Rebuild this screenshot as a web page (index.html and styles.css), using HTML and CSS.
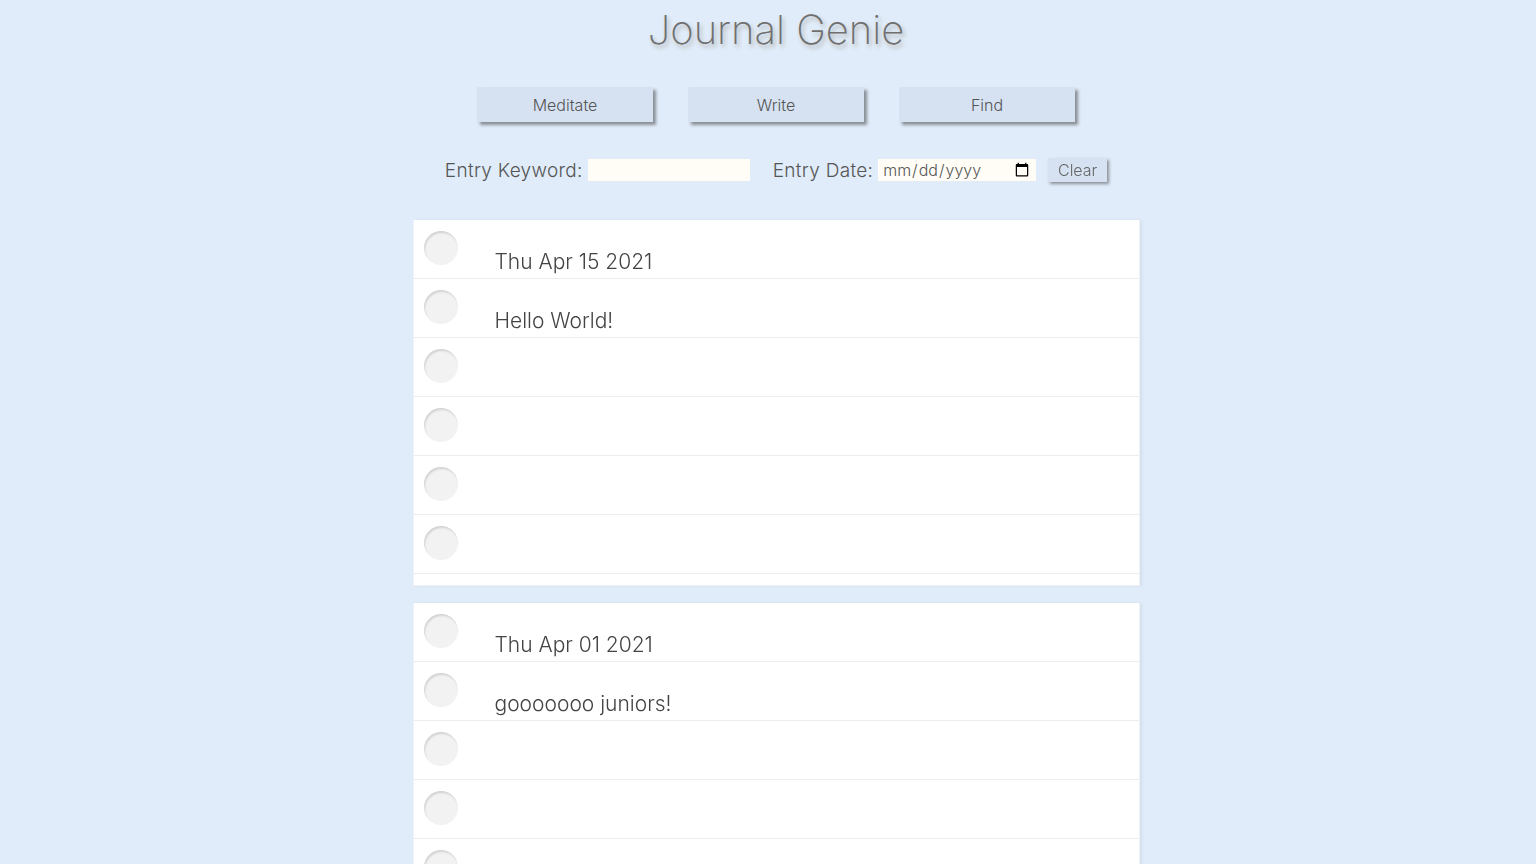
FILE: index.html
```html
<!DOCTYPE html>
<html lang="en">
<head>
<meta charset="utf-8">
<title>Journal Genie</title>
<link rel="stylesheet" href="styles.css">
</head>
<body>
<div class="app">
  <h1 class="title">Journal Genie</h1>
  <nav class="actions">
    <button class="action">Meditate</button>
    <button class="action">Write</button>
    <button class="action">Find</button>
  </nav>
  <form class="search">
    <label class="field">Entry Keyword: <input class="keyword" type="text" autofocus></label>
    <label class="field">Entry Date: <input class="date" type="date"></label>
    <button type="button" class="clear">Clear</button>
  </form>
  <main class="entries">
    <section class="page">
      <div class="line"><span class="hole"></span><span class="text">Thu Apr 15 2021</span></div>
      <div class="line"><span class="hole"></span><span class="text">Hello World!</span></div>
      <div class="line"><span class="hole"></span></div>
      <div class="line"><span class="hole"></span></div>
      <div class="line"><span class="hole"></span></div>
      <div class="line"><span class="hole"></span></div>
      <div class="line"><span class="hole"></span></div>
      <div class="line"><span class="hole"></span></div>
    </section>
    <section class="page">
      <div class="line"><span class="hole"></span><span class="text">Thu Apr 01 2021</span></div>
      <div class="line"><span class="hole"></span><span class="text">gooooooo juniors!</span></div>
      <div class="line"><span class="hole"></span></div>
      <div class="line"><span class="hole"></span></div>
      <div class="line"><span class="hole"></span></div>
      <div class="line"><span class="hole"></span></div>
      <div class="line"><span class="hole"></span></div>
      <div class="line"><span class="hole"></span></div>
    </section>
    <section class="page">
      <div class="line"><span class="hole"></span></div>
      <div class="line"><span class="hole"></span></div>
      <div class="line"><span class="hole"></span></div>
      <div class="line"><span class="hole"></span></div>
      <div class="line"><span class="hole"></span></div>
      <div class="line"><span class="hole"></span></div>
      <div class="line"><span class="hole"></span></div>
    </section>
    <section class="page">
      <div class="line"><span class="hole"></span></div>
      <div class="line"><span class="hole"></span></div>
      <div class="line"><span class="hole"></span></div>
      <div class="line"><span class="hole"></span></div>
      <div class="line"><span class="hole"></span></div>
      <div class="line"><span class="hole"></span></div>
      <div class="line"><span class="hole"></span></div>
    </section>
    <section class="page">
      <div class="line"><span class="hole"></span></div>
      <div class="line"><span class="hole"></span></div>
      <div class="line"><span class="hole"></span></div>
      <div class="line"><span class="hole"></span></div>
      <div class="line"><span class="hole"></span></div>
      <div class="line"><span class="hole"></span></div>
      <div class="line"><span class="hole"></span></div>
    </section>
    <section class="page">
      <div class="line"><span class="hole"></span></div>
      <div class="line"><span class="hole"></span></div>
      <div class="line"><span class="hole"></span></div>
      <div class="line"><span class="hole"></span></div>
      <div class="line"><span class="hole"></span></div>
      <div class="line"><span class="hole"></span></div>
      <div class="line"><span class="hole"></span></div>
    </section>
  </main>
</div>
</body>
</html>
```
FILE: styles.css
```css
html {
  background: #e0ecf9;
  overflow: scroll;
}
::-webkit-scrollbar {
  width: 15px;
  height: 15px;
  background: #f8f8f8;
}
::-webkit-scrollbar-track:vertical {
  border-left: 1px solid #ececec;
}
::-webkit-scrollbar-thumb {
  background: #c4c4c4;
  background-clip: padding-box;
  border: 3px solid transparent;
  border-radius: 8px;
}
::-webkit-scrollbar-thumb:vertical {
  background: linear-gradient(#c4c4c4 0 9px, transparent 9px);
  background-clip: padding-box;
  border-top: 0;
}
::-webkit-scrollbar-corner {
  background: #fbfbfb;
}
body {
  margin: 8px;
  font-family: Inter, "Noto Sans", sans-serif;
  font-weight: 300;
  color: #444;
}
.app {
  width: 100vw;
  display: flex;
  flex-direction: column;
  align-items: center;
}
.title {
  margin: 0;
  font-size: 40px;
  line-height: 44px;
  font-weight: 200;
  color: #6f6f6f;
  text-shadow: 2px 3px 4px #b0b0b0;
}
.actions {
  margin-top: 35px;
  display: flex;
  gap: 35px;
}
.action {
  width: 176px;
  height: 35px;
  border: none;
  background: #d6e2f2;
  box-shadow: 3px 3px 3px #8a8f96;
  font-family: inherit;
  font-weight: 300;
  font-size: 16px;
  color: #555;
  cursor: pointer;
}
.search {
  margin-top: 36px;
  display: flex;
  align-items: center;
  gap: 23px;
}
.field {
  display: flex;
  align-items: center;
  gap: 5px;
  font-size: 19px;
  letter-spacing: 0.3px;
  color: #555;
}
.keyword, .date {
  height: 22px;
  box-sizing: border-box;
  border: none;
  outline: none;
  background: #fffdf6;
  font-family: inherit;
  font-weight: 300;
  font-size: 16px;
  letter-spacing: 0;
  color: #555;
  padding: 0 4px;
}
.keyword { width: 162px; }
.date { width: 158px; }
.clear {
  margin-left: -11px;
  height: 24px;
  width: 59px;
  padding: 0;
  border: none;
  background: #d6e2f2;
  box-shadow: 2px 2px 3px #8a8f96;
  font-family: inherit;
  font-weight: 300;
  font-size: 16px;
  color: #666;
}
.entries {
  margin-top: 38px;
  display: flex;
  flex-direction: column;
  gap: 17px;
}
.page {
  width: 727px;
  height: 366px;
  overflow: hidden;
  background: #fff;
  box-sizing: border-box;
  border: 1px solid #eef1f5;
  border-top: 0;
  box-shadow: 2px 0 3px rgba(0,0,0,0.06);
}
.line {
  height: 58px;
  border-bottom: 1px solid #ebedf0;
  display: flex;
  align-items: flex-start;
  flex-shrink: 0;
}
.hole {
  flex: none;
  width: 34px;
  height: 34px;
  margin: 11px 0 0 10px;
  border-radius: 50%;
  background: #f2f2f2;
  box-shadow: inset 1px 2px 2px rgba(0,0,0,0.13);
}
.text {
  margin-left: 37px;
  padding-top: 29px;
  font-size: 21px;
  line-height: 26px;
  color: #444;
}
```
